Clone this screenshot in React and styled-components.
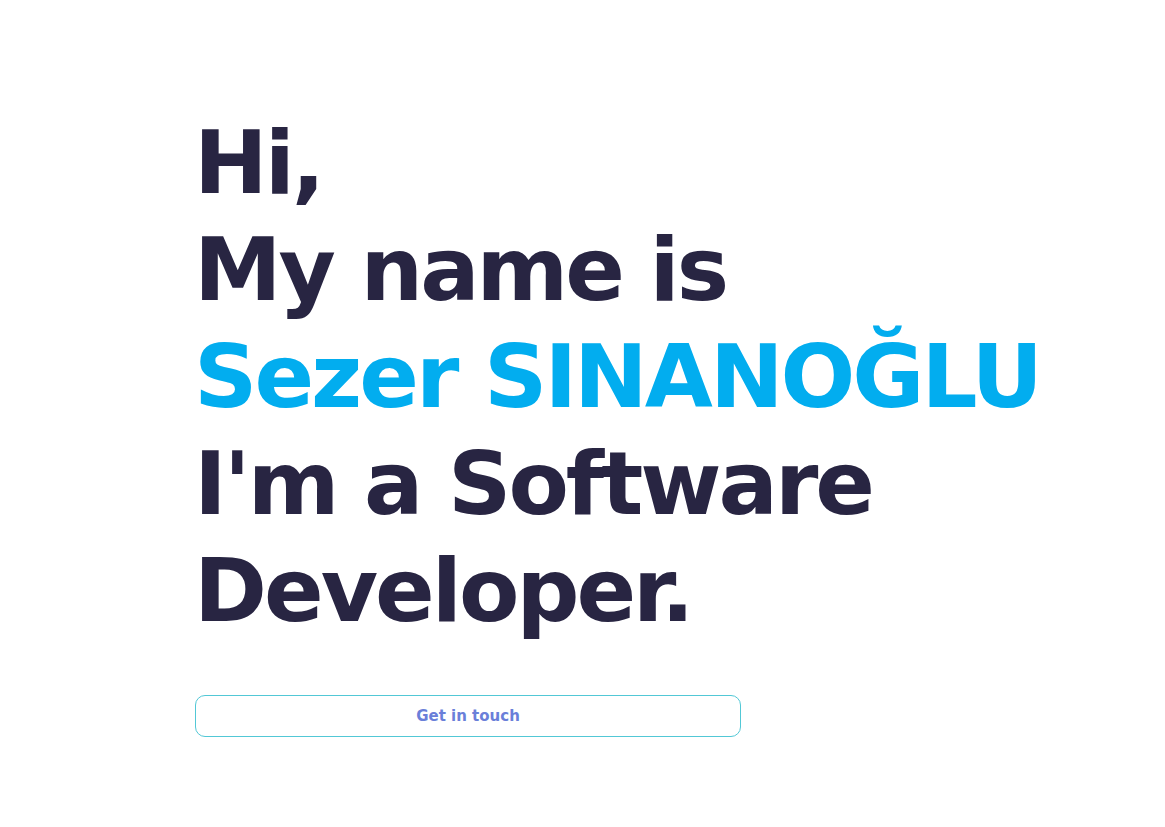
import React from 'react';
import styled, { createGlobalStyle } from 'styled-components';

const GlobalStyle = createGlobalStyle`
  html, body {
    margin: 0;
    background: #ffffff;
  }
  body {
    font-family: "DejaVu Sans", "Noto Sans", sans-serif;
  }
`;

const App = () => {
  return (
    <>
      <GlobalStyle />
      <Page>
        <Intro>
          <Heading>
            <Line>Hi,</Line>
            <Line>My name is</Line>
            <Line $accent>Sezer SINANOĞLU</Line>
            <Line>I'm a Software</Line>
            <Line>Developer.</Line>
          </Heading>
          <ContactButton type="button">Get in touch</ContactButton>
        </Intro>
      </Page>
    </>
  );
};

const Page = styled.main`
  min-height: 827px;
  padding: 109px 0 0 195px;
  box-sizing: border-box;
`;

const Intro = styled.section`
  display: flex;
  flex-direction: column;
  align-items: flex-start;
  gap: 51px;
`;

const Heading = styled.h1`
  margin: 0 0 0 -1px;
  font-family: "DejaVu Sans", sans-serif;
  font-weight: 700;
  font-size: 88px;
  line-height: 107px;
  letter-spacing: -3px;
  color: #282542;
`;

const Line = styled.span`
  display: block;
  white-space: nowrap;
  color: ${(p) => (p.$accent ? '#02adef' : 'inherit')};
`;

const ContactButton = styled.button`
  width: 546px;
  height: 42px;
  border: 1px solid #52c8d6;
  border-radius: 10px;
  background: #ffffff;
  color: #6a7fd9;
  font-family: "DejaVu Sans", sans-serif;
  font-weight: 700;
  font-size: 15px;
  cursor: pointer;
`;

export default App;
